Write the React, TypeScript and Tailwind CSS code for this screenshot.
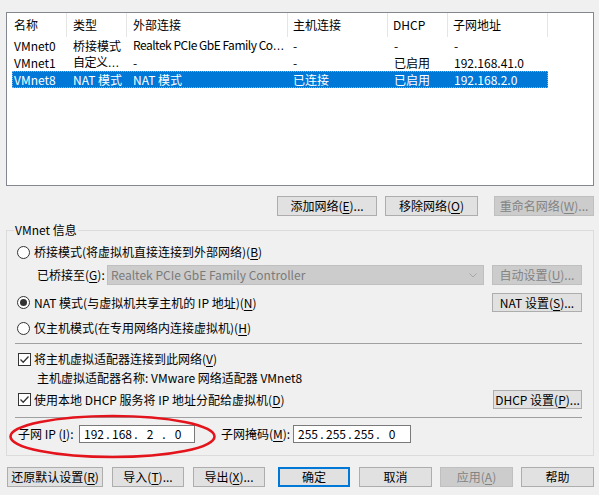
import type { ReactNode } from "react";

const COLS = [
  { label: "名称", w: "w-[60px]", pl: "pl-[7px]" },
  { label: "类型", w: "w-[60px]", pl: "pl-[6px]" },
  { label: "外部连接", w: "w-[161px]", pl: "pl-[6px]" },
  { label: "主机连接", w: "w-[100px]", pl: "pl-[5px]" },
  { label: "DHCP", w: "w-[60px]", pl: "pl-[5px]" },
  { label: "子网地址", w: "w-[100px]", pl: "pl-[5px]" }
];

const ROW_COLS = [
  "w-[55px] pl-[2px]",
  "w-[60px] pl-[6px]",
  "w-[161px] pl-[6px]",
  "w-[100px] pl-[5px]",
  "w-[60px] pl-[6px]",
  "w-[100px] pl-[6px]"
];

const ROWS = [
  ["VMnet0", "桥接模式", "Realtek PCIe GbE Family Co…", "-", "-", "-"],
  ["VMnet1", "自定义…", "-", "-", "已启用", "192.168.41.0"],
  ["VMnet8", "NAT 模式", "NAT 模式", "已连接", "已启用", "192.168.2.0"]
];

function Mn({ children }: { children: ReactNode }) {
  return <span className="underline underline-offset-[2px]">{children}</span>;
}

function Cell({ text }: { text: string }) {
  if (!text.endsWith("…")) return <>{text}</>;
  return (
    <span className="tracking-[-0.5px]">
      {text.slice(0, -1)}
      <span className="font-['Liberation_Sans',sans-serif] tracking-normal">…</span>
    </span>
  );
}

function Btn({
  children,
  className = "",
  disabled,
  primary
}: {
  children: ReactNode;
  className?: string;
  disabled?: boolean;
  primary?: boolean;
}) {
  return (
    <div
      className={`flex shrink-0 items-center justify-center ${
        disabled
          ? "border border-[#bfbfbf] bg-[#cccccc] text-[#838383]"
          : primary
            ? "border-2 border-[#0078d7] bg-[#e1e1e1]"
            : "border border-[#adadad] bg-[#e1e1e1]"
      } ${className}`}
    >
      {children}
    </div>
  );
}

function Radio({ checked }: { checked?: boolean }) {
  return (
    <div className="flex h-[13px] w-[13px] shrink-0 items-center justify-center rounded-full border border-[#333] bg-white">
      {checked ? <div className="h-[7px] w-[7px] rounded-full bg-[#333]" /> : null}
    </div>
  );
}

function Check() {
  return (
    <div className="flex h-[13px] w-[13px] shrink-0 items-center justify-center border border-[#333] bg-white">
      <svg width="11" height="11" viewBox="0 0 11 11">
        <path d="M1.5 5.5 L4.2 8.2 L9.5 2.5" fill="none" stroke="#333" strokeWidth="1.3" />
      </svg>
    </div>
  );
}

function IpBox({ parts, className }: { parts: string[]; className: string }) {
  return (
    <div className={`flex h-[18px] items-center border border-[#7a7a7a] bg-white pl-[2px] ${className}`}>
      {parts.map((p, i) => (
        <div key={i} className="flex items-center">
          {i > 0 ? <span className="w-[4px] text-center">.</span> : null}
          <span className="w-[24px] text-center">{p}</span>
        </div>
      ))}
    </div>
  );
}

export default function App() {
  return (
    <div className="relative h-[495px] w-[599px] overflow-hidden bg-[#f0f0f0] font-['Noto_Sans_CJK_SC',sans-serif] text-[12px] leading-[16px] text-black">
      {/* network list */}
      <div className="pl-[6px] pt-[12px]">
        <div className="h-[174px] w-[588px] border border-[#828790] bg-white">
          <div className="flex h-[24px]">
            {COLS.map((c) => (
              <div key={c.label} className={`flex items-center border-r border-[#e5e5e5] ${c.w} ${c.pl}`}>
                {c.label}
              </div>
            ))}
          </div>
          {ROWS.map((row, r) => {
            const selected = r === 2;
            return (
              <div
                key={row[0]}
                className={`ml-[5px] flex h-[17px] w-[536px] ${
                  selected ? "bg-[#0078d7] text-white outline-1 -outline-offset-1 outline-dotted outline-[#7fb3e6]" : ""
                }`}
              >
                {row.map((cell, i) => (
                  <div key={i} className={`flex items-center overflow-hidden whitespace-nowrap ${ROW_COLS[i]}`}>
                    <Cell text={cell} />
                  </div>
                ))}
              </div>
            );
          })}
        </div>
      </div>

      {/* list buttons */}
      <div className="mt-[10px] flex h-[20px]">
        <Btn className="ml-[277px] w-[100px]">
          添加网络(<Mn>E</Mn>)...
        </Btn>
        <Btn className="ml-[8px] w-[93px]">
          移除网络(<Mn>O</Mn>)
        </Btn>
        <Btn className="ml-[16px] w-[100px]" disabled>
          重命名网络(<Mn>W</Mn>)...
        </Btn>
      </div>

      {/* VMnet info group */}
      <fieldset className="mx-[6px] mt-[6px] w-[588px] border border-[#dcdcdc]">
        <legend className="ml-[7px] px-[1px] leading-[16px]">VMnet 信息</legend>
        <div className="pl-[10px] pr-[11px] pb-[12px]">
          <div className="mt-[4px] flex h-[20px] items-center gap-[4px]">
            <Radio />
            <span>
              桥接模式(将虚拟机直接连接到外部网络)(<Mn>B</Mn>)
            </span>
          </div>
          <div className="mt-[3px] flex h-[20px] items-center">
            <span className="w-[90px] shrink-0 pl-[20px]">
              已桥接至(<Mn>G</Mn>):
            </span>
            <div className="flex h-[20px] w-[377px] items-center justify-between border border-[#bfbfbf] bg-[#cccccc] pl-[3px] pr-[6px] text-[#7a7a7a]">
              <span>Realtek PCIe GbE Family Controller</span>
              <svg width="8" height="5" viewBox="0 0 8 5">
                <path d="M0.5 0.5 L4 4 L7.5 0.5" fill="none" stroke="#a6a6a6" strokeWidth="1" />
              </svg>
            </div>
            <Btn className="ml-[8px] h-[20px] w-[90px]" disabled>
              自动设置(<Mn>U</Mn>)...
            </Btn>
          </div>
          <div className="mt-[8px] flex h-[19px] items-center justify-between">
            <div className="flex items-center gap-[4px]">
              <Radio checked />
              <span>
                NAT 模式(与虚拟机共享主机的 IP 地址)(<Mn>N</Mn>)
              </span>
            </div>
            <Btn className="h-[19px] w-[90px]">
              NAT 设置(<Mn>S</Mn>)...
            </Btn>
          </div>
          <div className="mt-[6px] flex h-[20px] items-center gap-[4px]">
            <Radio />
            <span>
              仅主机模式(在专用网络内连接虚拟机)(<Mn>H</Mn>)
            </span>
          </div>
          <div className="ml-[-2px] mt-[5px] h-px bg-[#a0a0a0]" />
          <div className="mt-[5px] flex h-[20px] items-center gap-[3px] pl-[1px]">
            <Check />
            <span>
              将主机虚拟适配器连接到此网络(<Mn>V</Mn>)
            </span>
          </div>
          <div className="flex h-[18px] items-center pl-[20px]">主机虚拟适配器名称: VMware 网络适配器 VMnet8</div>
          <div className="mt-[3px] flex h-[19px] items-center justify-between">
            <div className="flex items-center gap-[3px] pl-[1px]">
              <Check />
              <span>
                使用本地 DHCP 服务将 IP 地址分配给虚拟机(<Mn>D</Mn>)
              </span>
            </div>
            <Btn className="h-[19px] w-[89px]">
              DHCP 设置(<Mn>P</Mn>)...
            </Btn>
          </div>
          <div className="ml-[-2px] mt-[8px] h-px bg-[#a0a0a0]" />
          <div className="mt-[7px] flex h-[18px] items-center pl-[1px]">
            <span className="w-[61px] shrink-0">
              子网 IP (<Mn>I</Mn>):
            </span>
            <IpBox parts={["192", "168", "2", "0"]} className="w-[116px]" />
            <span className="ml-[26px] w-[72px] shrink-0">
              子网掩码(<Mn>M</Mn>):
            </span>
            <IpBox parts={["255", "255", "255", "0"]} className="w-[118px]" />
          </div>
        </div>
      </fieldset>

      {/* dialog buttons */}
      <div className="mt-[11px] flex h-[20px] pl-[7px]">
        <Btn className="w-[96px]">
          还原默认设置(<Mn>R</Mn>)
        </Btn>
        <Btn className="ml-[9px] w-[72px]">
          导入(<Mn>T</Mn>)...
        </Btn>
        <Btn className="ml-[9px] w-[72px]">
          导出(<Mn>X</Mn>)...
        </Btn>
        <Btn className="ml-[13px] w-[72px]" primary>
          确定
        </Btn>
        <Btn className="ml-[9px] w-[73px]">取消</Btn>
        <Btn className="ml-[8px] w-[73px]" disabled>
          应用(<Mn>A</Mn>)
        </Btn>
        <Btn className="ml-[8px] w-[73px]">帮助</Btn>
      </div>

      {/* red annotation */}
      <svg className="pointer-events-none absolute left-[8px] top-[414px]" width="210" height="46" viewBox="0 0 210 46">
        <ellipse cx="104.5" cy="22.5" rx="102" ry="20.5" fill="none" stroke="#e3141c" strokeWidth="2.6" />
      </svg>
    </div>
  );
}
